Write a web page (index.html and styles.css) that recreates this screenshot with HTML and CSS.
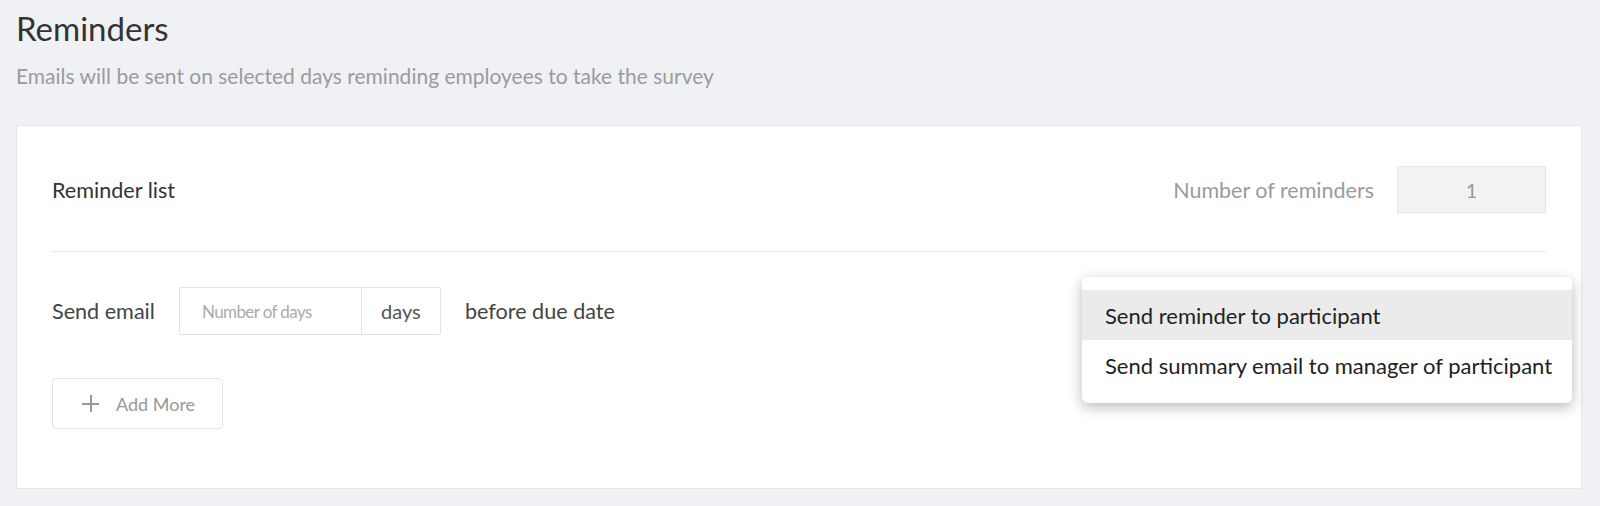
FILE: index.html
```html
<!DOCTYPE html>
<html>
<head>
<meta charset="utf-8">
<link rel="stylesheet" href="styles.css">
</head>
<body>
<div class="page">
  <h1 class="title">Reminders</h1>
  <p class="subtitle">Emails will be sent on selected days reminding employees to take the survey</p>
  <div class="card">
    <div class="card-head">
      <div class="label">Reminder list</div>
      <div class="count">
        <span class="count-label">Number of reminders</span>
        <div class="count-box">1</div>
      </div>
    </div>
    <div class="card-body">
      <div class="send-row">
        <span class="label">Send email</span>
        <div class="input-group">
          <div class="input-field">Number of days</div>
          <div class="input-addon">days</div>
        </div>
        <span class="label">before due date</span>
      </div>
      <button class="add-btn"><span class="plus"></span>Add More</button>
    </div>
    <div class="menu">
      <div class="menu-item active">Send reminder to participant</div>
      <div class="menu-item">Send summary email to manager of participant</div>
    </div>
  </div>
</div>
</body>
</html>
```
FILE: styles.css
```css
* { box-sizing: border-box; }
html, body { margin: 0; padding: 0; }
body {
  background: #f0f1f5;
  font-family: "Lato", "Open Sans", sans-serif;
  color: #333;
  width: 1600px;
  height: 506px;
  overflow: hidden;
}
.page { padding: 8px 18px 0 16px; }
.title {
  margin: 0;
  font-size: 33px;
  font-weight: 400;
  line-height: 40px;
  color: #333;
}
.subtitle {
  margin: 16px 0 0 0;
  font-size: 21px;
  line-height: 24px;
  color: #9b9b9b;
}
.card {
  position: relative;
  margin-top: 37px;
  background: #fff;
  border: 1px solid #e6e6e8;
  padding: 0 35px 59px 35px;
}
.card-head {
  height: 126px;
  display: flex;
  align-items: center;
  justify-content: space-between;
  border-bottom: 1px solid #e6e6e6;
  padding-top: 2px;
}
.label { font-size: 21.6px; color: #444; }
.card-head .label { color: #333; }
.count { display: flex; align-items: center; gap: 23px; }
.count-label { font-size: 21.5px; color: #9b9b9b; }
.count-box {
  width: 149px;
  height: 47px;
  background: #f2f2f2;
  border: 1px solid #e6e6e6;
  display: flex;
  align-items: center;
  justify-content: center;
  font-size: 20px;
  color: #999;
}
.card-body { padding-top: 35px; }
.send-row { display: flex; align-items: center; gap: 24px; }
.input-group {
  display: flex;
  height: 48px;
  border: 1px solid #e3e3e3;
  border-radius: 2px;
}
.input-field {
  width: 182px;
  display: flex;
  align-items: center;
  padding-left: 22px;
  font-size: 17px;
  letter-spacing: -0.6px;
  color: #aaa;
  border-right: 1px solid #e3e3e3;
}
.input-addon {
  width: 78px;
  display: flex;
  align-items: center;
  justify-content: center;
  font-size: 20px;
  color: #555;
}
.add-btn {
  margin-top: 43px;
  width: 171px;
  height: 51px;
  background: #fff;
  border: 1px solid #e3e3e3;
  border-radius: 4px;
  display: flex;
  align-items: center;
  padding: 0 0 0 29px;
  font-family: inherit;
  font-size: 18px;
  color: #999;
  gap: 17px;
}
.plus {
  position: relative;
  width: 17px;
  height: 17px;
  display: inline-block;
}
.plus::before, .plus::after {
  content: "";
  position: absolute;
  background: #999;
}
.plus::before { left: 0; top: 8px; width: 17px; height: 2px; }
.plus::after { left: 8px; top: 0; width: 2px; height: 17px; }
.menu {
  position: absolute;
  left: 1065px;
  top: 151px;
  width: 490px;
  background: #fff;
  border-radius: 6px;
  box-shadow: 0 4px 14px rgba(0,0,0,0.28);
  padding: 13px 0;
}
.menu-item {
  height: 50px;
  display: flex;
  align-items: center;
  padding-left: 23px;
  font-size: 22px;
  color: #222;
}
.menu-item.active { background: #ebebeb; }
```
